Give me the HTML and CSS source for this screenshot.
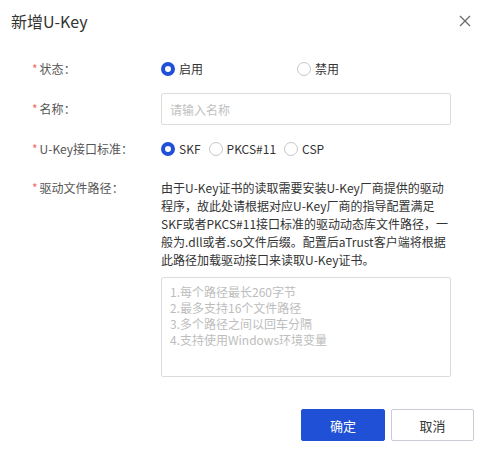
FILE: index.html
```html
<!DOCTYPE html>
<html lang="zh-CN">
<head>
<meta charset="utf-8">
<title>新增U-Key</title>
<link rel="stylesheet" href="styles.css">
</head>
<body>
<div class="dialog">
  <div class="header">
    <span class="title">新增U-Key</span>
    <svg class="close" width="12" height="12" viewBox="0 0 12 12"><path d="M1 1L11 11M11 1L1 11" stroke="#6b6b6b" stroke-width="1.3" fill="none"/></svg>
  </div>
  <div class="form">
    <div class="row">
      <div class="label"><span class="req">*</span>状态<span class="colon">：</span></div>
      <div class="control radios-wide">
        <label class="radio"><span class="dot on"></span>启用</label>
        <label class="radio"><span class="dot"></span>禁用</label>
      </div>
    </div>
    <div class="row">
      <div class="label"><span class="req">*</span>名称<span class="colon">：</span></div>
      <div class="control">
        <div class="input">请输入名称</div>
      </div>
    </div>
    <div class="row">
      <div class="label"><span class="req">*</span>U-Key接口标准<span class="colon">：</span></div>
      <div class="control radios">
        <label class="radio"><span class="dot on"></span>SKF</label>
        <label class="radio"><span class="dot"></span>PKCS#11</label>
        <label class="radio"><span class="dot"></span>CSP</label>
      </div>
    </div>
    <div class="row row-top">
      <div class="label"><span class="req">*</span>驱动文件路径<span class="colon">：</span></div>
      <div class="control col">
        <p class="desc">由于U-Key证书的读取需要安装U-Key厂商提供的驱动程序，故此处请根据对应U-Key厂商的指导配置满足SKF或者PKCS#11接口标准的驱动动态库文件路径，一般为.dll或者.so文件后缀。配置后aTrust客户端将根据此路径加载驱动接口来读取U-Key证书。</p>
        <div class="textarea">1.每个路径最长260字节<br>2.最多支持16个文件路径<br>3.多个路径之间以回车分隔<br>4.支持使用Windows环境变量</div>
      </div>
    </div>
  </div>
  <div class="footer">
    <button class="btn primary">确定</button>
    <button class="btn">取消</button>
  </div>
</div>
</body>
</html>
```
FILE: styles.css
```css
* { box-sizing: border-box; }
html, body { margin: 0; padding: 0; background: #fff; }
body {
  font-family: "Noto Sans CJK SC", "Noto Sans", sans-serif;
  font-size: 12px;
  color: #333;
}
.dialog {
  width: 481px;
  height: 450px;
  display: flex;
  flex-direction: column;
}
.header {
  height: 42px;
  display: flex;
  align-items: center;
  justify-content: space-between;
  padding: 0 10px 0 11px;
}
.title {
  font-size: 16px;
  color: #333;
  line-height: 20px;
}
.close { display: block; }
.form {
  padding: 11px 30px 0 32px;
  display: flex;
  flex-direction: column;
  gap: 8px;
}
.row {
  display: flex;
  align-items: center;
  min-height: 32px;
}
.row-top {
  align-items: flex-start;
  margin-top: 6px;
}
.label {
  width: 129px;
  flex: none;
  color: #555;
  line-height: 18px;
}
.colon {
  font-family: "Noto Sans CJK TC", sans-serif;
}
.req {
  color: #f06a6a;
  margin-right: 2px;
}
.control {
  flex: 1;
  display: flex;
  align-items: center;
}
.col { flex-direction: column; align-items: stretch; }
.radios-wide { display: grid; grid-template-columns: 136px auto; }
.radios { gap: 8px; }
.radio {
  display: flex;
  align-items: center;
  gap: 4px;
  color: #333;
  line-height: 18px;
}
.dot {
  width: 14px;
  height: 14px;
  border-radius: 50%;
  border: 1px solid #c8c8c8;
  background: #fff;
  display: inline-block;
}
.dot.on { border: 4px solid #1f50d6; }
.input {
  width: 290px;
  height: 32px;
  border: 1px solid #dcdcdc;
  border-radius: 2px;
  padding: 0 8px;
  display: flex;
  align-items: center;
  color: #c0c0c0;
}
.desc {
  margin: 0;
  width: 290px;
  line-height: 18px;
  color: #333;
}
.textarea {
  margin-top: 8px;
  width: 290px;
  height: 100px;
  border: 1px solid #dcdcdc;
  border-radius: 2px;
  padding: 6px 8px;
  line-height: 16px;
  color: #bdbdbd;
}
.footer {
  margin-top: auto;
  padding: 0 7px 9px 0;
  display: flex;
  justify-content: flex-end;
  gap: 6px;
}
.btn {
  font-family: inherit;
  font-size: 13px;
  width: 83px;
  height: 32px;
  border: 1px solid #c9ccd6;
  border-radius: 2px;
  background: #fff;
  color: #333;
  padding: 0;
}
.btn.primary {
  width: 84px;
  background: #1f50d6;
  border-color: #1f50d6;
  color: #fff;
}
```
